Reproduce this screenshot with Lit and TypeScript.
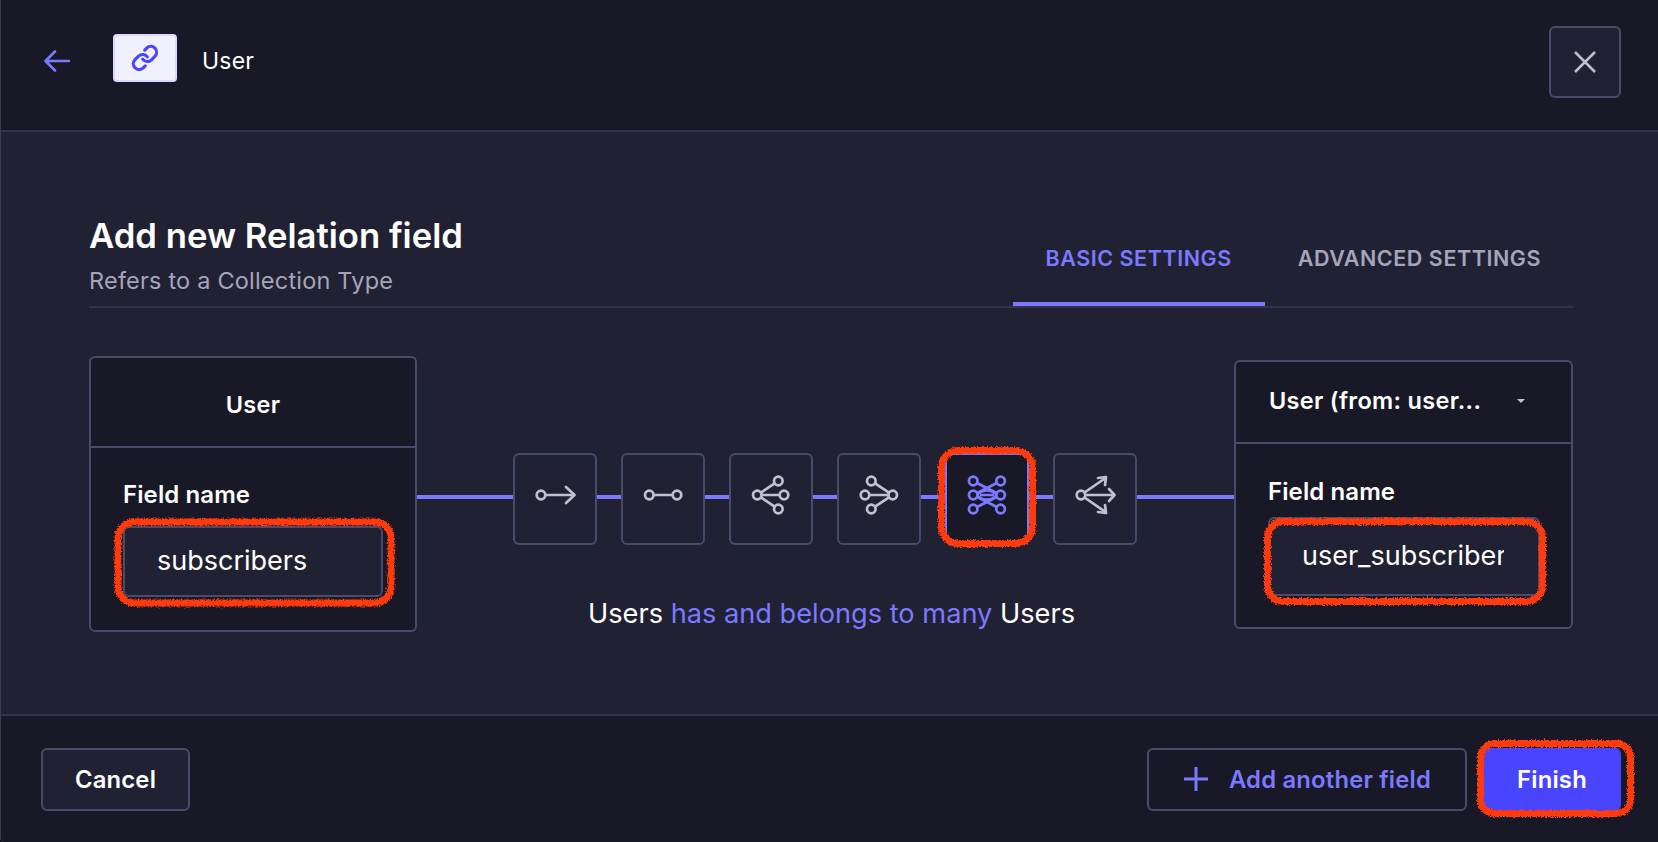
import { LitElement, html, css, svg } from "lit";
import { customElement } from "lit/decorators.js";

const dot = (x: number, y: number) => svg`<circle cx=${x} cy=${y} r="4.3"></circle>`;
const ln = (a: number, b: number, c: number, d: number) => svg`<line x1=${a} y1=${b} x2=${c} y2=${d}></line>`;

const relationIcons = [
  svg`${dot(8, 22)}${ln(12.3, 22, 41, 22)}<polyline points="33,14 41.5,22 33,30"></polyline>`,
  svg`${dot(8.3, 22)}${dot(36, 22)}${ln(12.6, 22, 31.7, 22)}`,
  svg`${dot(8.3, 22)}${dot(29.3, 8)}${dot(35, 22)}${dot(29.3, 36)}${ln(12, 19.6, 25.6, 10.4)}${ln(12.6, 22, 30.7, 22)}${ln(12, 24.4, 25.6, 33.6)}`,
  svg`${dot(14.3, 8)}${dot(8, 22)}${dot(14.3, 36)}${dot(35.7, 22)}${ln(18, 10.4, 32, 19.6)}${ln(12.3, 22, 31.4, 22)}${ln(18, 33.6, 32, 24.4)}`,
  svg`${dot(8.2, 8)}${dot(8.2, 22)}${dot(8.2, 36)}${dot(35.6, 8)}${dot(35.6, 22)}${dot(35.6, 36)}
      ${ln(12, 10, 31.6, 20)}${ln(12, 34, 31.6, 24)}${ln(31.8, 10, 12.2, 20)}${ln(31.8, 34, 12.2, 24)}
      ${ln(16, 22, 28, 22)}<path d="M12.5 21Q22 13.5 31.3 21"></path><path d="M12.5 23Q22 30.5 31.3 23"></path>`,
  svg`${dot(8, 22)}${ln(12.3, 22, 41, 22)}<polyline points="36,16 41.5,22 36,28"></polyline>
      ${ln(11.5, 19.5, 32.5, 5)}<polyline points="25,5 33,4 32,12"></polyline>
      ${ln(11.5, 24.5, 32.5, 39)}<polyline points="25,39 33,40 32,32"></polyline>`,
];

@customElement("app-root")
export class AppRoot extends LitElement {
  static styles = css`
    :host {
      display: block;
      width: 1658px;
      height: 842px;
      background: #0f0f18;
      font-family: Inter, "Liberation Sans", sans-serif;
      color: #ffffff;
    }
    * { box-sizing: border-box; }
    .modal {
      position: relative;
      width: 100%;
      height: 100%;
      display: flex;
      flex-direction: column;
      border-left: 1px solid #3a3a55;
      border-bottom-left-radius: 4px;
      overflow: hidden;
      background: #212134;
    }
    .top {
      height: 132px;
      flex: none;
      display: flex;
      align-items: center;
      padding: 0 37px 7px 43px;
      background: #181826;
      border-bottom: 2px solid #32324d;
    }
    .back { width: 26px; height: 22px; flex: none; margin-right: 43px; margin-bottom: 2px; }
    .back path { fill: none; stroke: #7b79ff; stroke-width: 2.6; stroke-linecap: round; stroke-linejoin: round; }
    .logo {
      width: 64px;
      height: 48px;
      flex: none;
      margin-right: 25px;
      margin-bottom: 7px;
      background: #f0f0ff;
      border: 2px solid #d9d8ff;
      border-radius: 4px;
      display: flex;
      align-items: center;
      justify-content: center;
    }
    .logo svg { width: 28px; height: 28px; }
    .logo path { fill: none; stroke: #4945ff; stroke-width: 2.7; stroke-linecap: round; stroke-linejoin: round; }
    .crumb { font-size: 23px; line-height: 30px; letter-spacing: 0.2px; color: #ffffff; margin-bottom: 1px; }
    .close {
      margin-left: auto;
      width: 72px;
      height: 72px;
      flex: none;
      background: #212134;
      border: 2px solid #4a4a6a;
      border-radius: 6px;
      display: flex;
      align-items: center;
      justify-content: center;
      padding: 0;
    }
    .close svg { width: 24px; height: 24px; }
    .close line { stroke: #c0c0cf; stroke-width: 2.5; }
    .body { flex: 1; padding: 83px 85px 0 88px; min-height: 0; }
    .head {
      display: flex;
      justify-content: space-between;
      align-items: flex-end;
      border-bottom: 2px solid #32324d;
    }
    .titles { padding-bottom: 10px; }
    h1 { margin: 0; font-size: 34.7px; line-height: 40px; font-weight: 600; color: #ffffff; }
    .sub { margin-top: 11px; font-size: 23.5px; line-height: 30px; letter-spacing: 0.2px; color: #a5a5ba; }
    .tabs { display: flex; margin-right: -1px; }
    .tab {
      padding: 0 33px 30px;
      font-size: 21.5px;
      line-height: 28px;
      font-weight: 600;
      letter-spacing: 0.55px;
      text-transform: uppercase;
      color: #a5a5ba;
      border-bottom: 4px solid transparent;
      white-space: nowrap;
    }
    .tab.active { color: #7b79ff; border-bottom-color: #7b79ff; }
    .relation { display: flex; align-items: flex-start; margin-top: 48px; }
    .card {
      flex: none;
      background: #181826;
      border: 2px solid #4a4a6a;
      border-radius: 6px;
      overflow: hidden;
    }
    .card.left { width: 328px; height: 276px; }
    .card.right { width: 339px; height: 269px; margin-top: 4px; }
    .card-head {
      display: flex;
      align-items: center;
      justify-content: center;
      border-bottom: 2px solid #4a4a6a;
      font-size: 23.5px;
      font-weight: 600;
      letter-spacing: 0.3px;
    }
    .left .card-head { height: 90px; padding-top: 4px; }
    .right .card-head { height: 82px; justify-content: space-between; padding: 0 46px 3px 33px; }
    .caret { width: 8px; height: 4px; flex: none; fill: #c0c0cf; }
    .card-body { padding: 0 32px; }
    .left .card-body { padding-top: 33px; }
    .right .card-body { padding-top: 34px; padding-right: 31px; }
    label { display: block; font-size: 24px; line-height: 28px; font-weight: 600; letter-spacing: 0.1px; color: #ffffff; }
    input {
      display: block;
      width: 100%;
      margin-top: 17px;
      height: 71px;
      padding: 0 34px 2px 32px;
      background: #212134;
      border: 2px solid #4a4a6a;
      border-radius: 6px;
      outline: none;
      color: #ffffff;
      font-family: inherit;
      font-size: 27px;
    }
    .right input { margin-top: 11px; height: 79px; }
    .middle { flex: 1; margin-top: 97px; display: flex; flex-direction: column; align-items: stretch; }
    .chain { display: flex; align-items: center; }
    .seg { height: 4px; background: #7b79ff; margin-top: -4px; }
    .seg.start { flex: 0 0 96px; }
    .seg.end { flex: 1; }
    .seg.mid { flex: 0 0 24px; }
    .rel {
      width: 84px;
      height: 92px;
      flex: none;
      background: #212134;
      border: 2px solid #4a4a6a;
      border-radius: 6px;
      display: flex;
      align-items: center;
      justify-content: center;
      padding-bottom: 8px;
    }
    .rel svg { width: 44px; height: 44px; overflow: visible; }
    .rel svg * { fill: none; stroke: #c0c0cf; stroke-width: 2.7; stroke-linecap: round; stroke-linejoin: round; }
    .rel.active { background: #181826; border-color: #7b79ff; }
    .rel.active svg * { stroke: #7b79ff; }
    .desc {
      margin-top: 51px;
      padding-left: 12px;
      text-align: center;
      font-size: 27.2px;
      line-height: 36px;
      color: #ffffff;
    }
    .desc span { color: #7b79ff; }
    .foot {
      height: 128px;
      flex: none;
      display: flex;
      align-items: center;
      padding: 0 37px 0 40px;
      background: #181826;
      border-top: 2px solid #32324d;
    }
    .btn {
      height: 63px;
      display: flex;
      align-items: center;
      justify-content: center;
      border-radius: 6px;
      font-size: 23.8px;
      font-weight: 600;
      letter-spacing: 0.2px;
      border: 2px solid #4a4a6a;
      white-space: nowrap;
    }
    .cancel { width: 149px; background: #212134; color: #ffffff; }
    .add { margin-left: auto; width: 320px; gap: 20px; color: #7b79ff; background: #181826; }
    .add svg { width: 26px; height: 26px; }
    .add line { stroke: #7b79ff; stroke-width: 3; }
    .finish { margin-left: 16px; width: 138px; background: #4945ff; border-color: #4945ff; color: #ffffff; }
    .marks { position: absolute; left: -1px; top: 0; width: 1658px; height: 842px; pointer-events: none; }
    .marks rect { fill: none; stroke: #ff3b0a; stroke-width: 7; }
  `;

  render() {
    const chain: unknown[] = [];
    relationIcons.forEach((icon, i) => {
      chain.push(html`<div class="seg ${i === 0 ? "start" : "mid"}"></div>`);
      chain.push(html`<div class="rel ${i === 4 ? "active" : ""}"><svg viewBox="0 0 44 44">${icon}</svg></div>`);
    });
    chain.push(html`<div class="seg end"></div>`);

    return html`
      <div class="modal">
        <header class="top">
          <svg class="back" viewBox="0 0 26 22"><path d="M1.5 11H25M11 1.5 1.5 11 11 20.5"></path></svg>
          <div class="logo">
            <svg viewBox="0 0 24 24">
              <path d="M10 13a5 5 0 0 0 7.54.54l3-3a5 5 0 0 0-7.07-7.07l-1.72 1.71"></path>
              <path d="M14 11a5 5 0 0 0-7.54-.54l-3 3a5 5 0 0 0 7.07 7.07l1.71-1.71"></path>
            </svg>
          </div>
          <div class="crumb">User</div>
          <button class="close" aria-label="Close">
            <svg viewBox="0 0 24 24"><line x1="2" y1="2" x2="22" y2="22"></line><line x1="22" y1="2" x2="2" y2="22"></line></svg>
          </button>
        </header>

        <main class="body">
          <div class="head">
            <div class="titles">
              <h1>Add new Relation field</h1>
              <div class="sub">Refers to a Collection Type</div>
            </div>
            <div class="tabs">
              <div class="tab active">Basic settings</div>
              <div class="tab">Advanced settings</div>
            </div>
          </div>

          <div class="relation">
            <section class="card left">
              <div class="card-head">User</div>
              <div class="card-body">
                <label>Field name</label>
                <input .value=${"subscribers"} />
              </div>
            </section>

            <div class="middle">
              <div class="chain">${chain}</div>
              <div class="desc">Users <span>has and belongs to many</span> Users</div>
            </div>

            <section class="card right">
              <div class="card-head">
                <span>User (from: user...</span>
                <svg class="caret" viewBox="0 0 8 4"><path d="M0 0h8L4 4z"></path></svg>
              </div>
              <div class="card-body">
                <label>Field name</label>
                <input .value=${"user_subscribers"} />
              </div>
            </section>
          </div>
        </main>

        <footer class="foot">
          <div class="btn cancel">Cancel</div>
          <div class="btn add">
            <svg viewBox="0 0 26 26"><line x1="13" y1="1" x2="13" y2="25"></line><line x1="1" y1="13" x2="25" y2="13"></line></svg>
            <span>Add another field</span>
          </div>
          <div class="btn finish">Finish</div>
        </footer>

        <svg class="marks" viewBox="0 0 1658 842">
          <defs>
            <filter id="rough" filterUnits="userSpaceOnUse" x="0" y="0" width="1658" height="842">
              <feTurbulence type="fractalNoise" baseFrequency="0.7" numOctaves="2" seed="4" result="n"></feTurbulence>
              <feDisplacementMap in="SourceGraphic" in2="n" scale="5" xChannelSelector="R" yChannelSelector="G"></feDisplacementMap>
            </filter>
          </defs>
          <g filter="url(#rough)">
            <rect x="118" y="522" width="273" height="81" rx="16"></rect>
            <rect x="941.5" y="450.5" width="91" height="93" rx="17"></rect>
            <rect x="1267.5" y="521.5" width="275" height="80" rx="16"></rect>
            <rect x="1480.5" y="743.5" width="150" height="70" rx="14"></rect>
          </g>
        </svg>
      </div>
    `;
  }
}
